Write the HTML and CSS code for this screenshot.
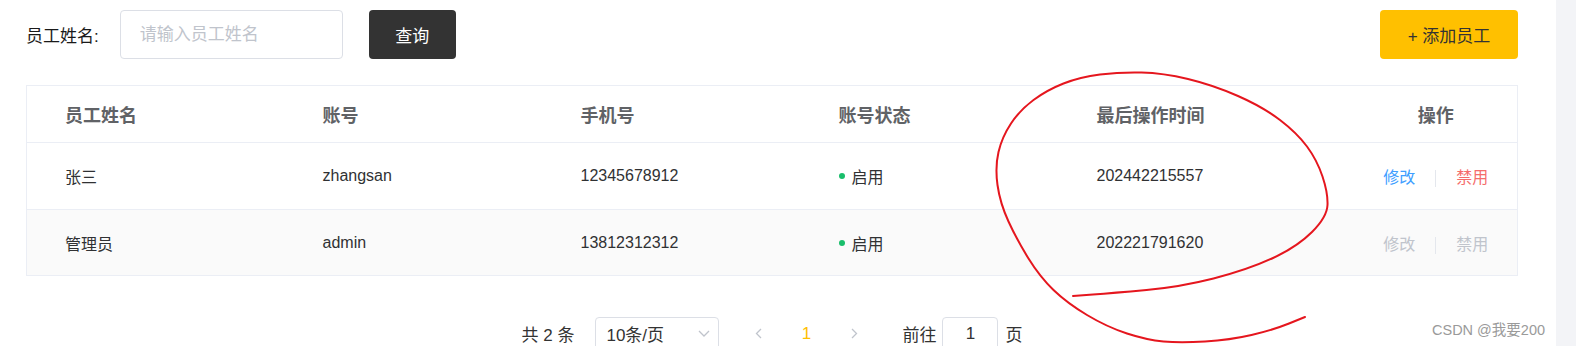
FILE: index.html
```html
<!DOCTYPE html>
<html lang="zh-CN">
<head>
  <meta charset="UTF-8" />
  <meta name="viewport" content="width=device-width, initial-scale=1.0"/>
  <title>员工管理</title>
  <link rel="stylesheet" href="styles.css">
</head>
<body>

  <div class="page">
    <main class="content">

      <div class="toolbar">
        <div class="search">
          <label class="search-label" for="name">员工姓名:</label>
          <input class="search-input" id="name" type="text" placeholder="请输入员工姓名">
          <button class="btn btn-dark">查询</button>
        </div>
        <button class="btn btn-yellow">+ 添加员工</button>
      </div>

      <table class="staff-table">
        <colgroup>
          <col style="width: 258px">
          <col style="width: 258px">
          <col style="width: 258px">
          <col style="width: 258px">
          <col style="width: 296px">
          <col>
        </colgroup>
        <thead>
          <tr>
            <th>员工姓名</th>
            <th>账号</th>
            <th>手机号</th>
            <th>账号状态</th>
            <th>最后操作时间</th>
            <th class="col-ops">操作</th>
          </tr>
        </thead>
        <tbody>
          <tr>
            <td>张三</td>
            <td>zhangsan</td>
            <td>12345678912</td>
            <td><span class="status"><i class="dot"></i>启用</span></td>
            <td>202442215557</td>
            <td class="col-ops">
              <a class="link link-edit">修改</a><span class="divider"></span><a class="link link-ban">禁用</a>
            </td>
          </tr>
          <tr class="striped">
            <td>管理员</td>
            <td>admin</td>
            <td>13812312312</td>
            <td><span class="status"><i class="dot"></i>启用</span></td>
            <td>202221791620</td>
            <td class="col-ops">
              <a class="link is-disabled">修改</a><span class="divider"></span><a class="link is-disabled">禁用</a>
            </td>
          </tr>
        </tbody>
      </table>

      <div class="pager">
        <span class="pager-total">共 2 条</span>
        <div class="pager-size">
          <span>10条/页</span>
          <svg width="12" height="7" viewBox="0 0 12 7"><polyline points="1,1 6,6 11,1" /></svg>
        </div>
        <button class="pager-btn">
          <svg width="7" height="11" viewBox="0 0 7 11"><polyline points="6,1 1.5,5.5 6,10" /></svg>
        </button>
        <span class="pager-num active">1</span>
        <button class="pager-btn">
          <svg width="7" height="11" viewBox="0 0 7 11"><polyline points="1,1 5.5,5.5 1,10" /></svg>
        </button>
        <span class="pager-jump">前往</span>
        <input class="pager-input" type="text" value="1">
        <span class="pager-unit">页</span>
      </div>

    </main>
    <aside class="gutter"></aside>
  </div>

  <!-- hand-drawn mark over the table -->
  <svg class="scribble" width="1576" height="346" viewBox="0 0 1576 346">
    <path d="M1073 296 L1093 294.5
      Q1113 293 1146.5 290 Q1180 287 1213.5 278.5 Q1247 270 1272 258.5
      Q1297 247 1312 232 Q1327 217 1327.5 205 Q1328 193 1322.5 176.5
      Q1317 160 1307 146.5 Q1297 133 1280 120 Q1263 107 1238 96
      Q1213 85 1188 79 Q1163 73 1141.5 72.5 Q1120 72 1100 74.5
      Q1080 77 1063.5 83.5 Q1047 90 1033.5 100 Q1020 110 1011 123.5
      Q1002 137 998.5 152 Q995 167 997.5 185 Q1000 203 1008.5 221.5
      Q1017 240 1028.5 258.5 Q1040 277 1053.5 290 Q1067 303 1087 315
      Q1107 327 1127 333.5 Q1147 340 1163.5 341.5 Q1180 343 1205 341.5
      Q1230 340 1251.5 335 Q1273 330 1289 323.5 L1305 317" />
  </svg>

  <div class="watermark">CSDN @我要200</div>

</body>
</html>
```

FILE: styles.css
```css
:root {
  --text-color: #303133;
  --head-color: #606266;
  --line-color: #ebeef5;
  --border-color: #dcdfe6;
  --muted-color: #c0c4cc;
  --yellow: #ffc000;
}

body {
  margin: 0;
  height: 346px;
  overflow: hidden;
  font-family: 'Liberation Sans', 'Noto Sans CJK SC', sans-serif;
  color: var(--text-color);
  background-color: #f3f4f7;
  position: relative;
}

.page {
  display: flex;
  height: 100%;
}

.content {
  width: 1556px;
  box-sizing: border-box;
  padding: 10px 38px 0 26px;
  background-color: #fff;
}

.gutter {
  flex: 1;
  background-color: #f3f4f7;
}

/* toolbar */
.toolbar {
  display: flex;
  justify-content: space-between;
  align-items: center;
  height: 49px;
}

.search {
  display: flex;
  align-items: center;
}

.search-label {
  font-size: 17px;
  color: #1a1a1a;
  margin-right: 21px;
}

.search-input {
  width: 223px;
  height: 49px;
  box-sizing: border-box;
  border: 1px solid var(--border-color);
  border-radius: 4px;
  padding: 0 19px;
  font-family: inherit;
  font-size: 17px;
  outline: none;
}

.search-input::placeholder {
  color: var(--muted-color);
}

.btn {
  height: 49px;
  border: none;
  border-radius: 4px;
  font-family: inherit;
  font-size: 17px;
  cursor: pointer;
}

.btn-dark {
  width: 87px;
  margin-left: 26px;
  background-color: #333;
  color: #fff;
}

.btn-yellow {
  width: 138px;
  background-color: var(--yellow);
  color: #333;
}

/* table */
.staff-table {
  width: 100%;
  margin-top: 26px;
  border-collapse: collapse;
  table-layout: fixed;
  border: 1px solid var(--line-color);
}

.staff-table th,
.staff-table td {
  padding: 0 0 0 38px;
  text-align: left;
  border-bottom: 1px solid var(--line-color);
}

.staff-table th {
  height: 56px;
  font-size: 18px;
  font-weight: bold;
  color: var(--head-color);
}

.staff-table td {
  height: 66px;
  font-size: 16px;
}

.staff-table .striped td {
  height: 65px;
  background-color: #fafafa;
}

.staff-table .col-ops {
  padding: 0;
  text-align: center;
}

.status {
  display: inline-flex;
  align-items: center;
}

.dot {
  width: 6px;
  height: 6px;
  border-radius: 50%;
  background-color: #19be6b;
  margin-right: 7px;
}

.link {
  font-size: 16px;
  cursor: pointer;
}

.link-edit {
  color: #409eff;
}

.link-ban {
  color: #f56c6c;
}

.link.is-disabled {
  color: var(--muted-color);
  cursor: not-allowed;
}

.divider {
  display: inline-block;
  width: 1px;
  height: 17px;
  margin: 0 20px;
  vertical-align: middle;
  background-color: #e4e7ed;
}

/* pagination */
.pager {
  display: flex;
  justify-content: center;
  align-items: center;
  margin-top: 41px;
  font-size: 17px;
  color: #333;
}

.pager-total {
  margin-right: 21px;
}

.pager-size {
  display: flex;
  justify-content: space-between;
  align-items: center;
  width: 124px;
  height: 33px;
  box-sizing: border-box;
  padding: 0 8px 0 10px;
  border: 1px solid var(--border-color);
  border-radius: 4px;
}

.pager-size svg,
.pager-btn svg {
  fill: none;
  stroke: var(--muted-color);
  stroke-width: 1.3;
}

.pager-btn {
  width: 48px;
  height: 33px;
  padding: 0;
  border: none;
  background: none;
  display: flex;
  justify-content: center;
  align-items: center;
}

.pager-btn:first-of-type {
  margin-left: 15px;
}

.pager-num {
  width: 48px;
  text-align: center;
}

.pager-num.active {
  color: var(--yellow);
}

.pager-jump {
  margin-left: 24px;
}

.pager-input {
  width: 56px;
  height: 33px;
  box-sizing: border-box;
  margin: 0 7px 0 6px;
  border: 1px solid var(--border-color);
  border-radius: 4px;
  text-align: center;
  font-family: inherit;
  font-size: 17px;
  color: #333;
  outline: none;
}

/* overlays */
.scribble {
  position: absolute;
  top: 0;
  left: 0;
  pointer-events: none;
}

.scribble path {
  fill: none;
  stroke: #e5161e;
  stroke-width: 2;
  stroke-linecap: round;
}

.watermark {
  position: absolute;
  left: 1432px;
  top: 318px;
  font-size: 14.5px;
  color: #9a9a9a;
  white-space: nowrap;
}
```
